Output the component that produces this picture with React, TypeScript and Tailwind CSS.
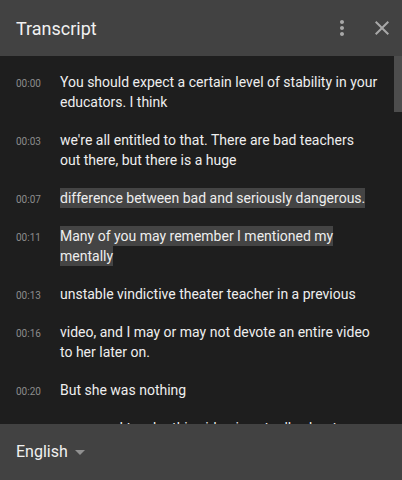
const cues = [
  { time: '00:00', lines: ['You should expect a certain level of stability in your', 'educators. I think'] },
  { time: '00:03', lines: ["we're all entitled to that. There are bad teachers", 'out there, but there is a huge'] },
  { time: '00:07', lines: ['difference between bad and seriously dangerous.'], active: true },
  { time: '00:11', lines: ['Many of you may remember I mentioned my', 'mentally'], active: true },
  { time: '00:13', lines: ['unstable vindictive theater teacher in a previous'] },
  { time: '00:16', lines: ['video, and I may or may not devote an entire video', 'to her later on.'] },
  { time: '00:20', lines: ['But she was nothing'] },
  { time: '00:22', lines: ['compared to who this video is actually about'] },
];

export default function App() {
  return (
    <div className="flex h-[480px] w-[402px] flex-col bg-[#1e1e1e] font-['Roboto',sans-serif]">
      <header className="flex h-14 shrink-0 items-center bg-[#424242] pl-4 pr-2">
        <h1 className="flex-1 text-[18px] text-[#f1f1f1]">Transcript</h1>
        <div className="flex items-center gap-4">
          <svg viewBox="0 0 24 24" className="h-6 w-6 fill-[#a8a8a8]">
            <path d="M12 8c1.1 0 2-.9 2-2s-.9-2-2-2-2 .9-2 2 .9 2 2 2zm0 2c-1.1 0-2 .9-2 2s.9 2 2 2 2-.9 2-2-.9-2-2-2zm0 6c-1.1 0-2 .9-2 2s.9 2 2 2 2-.9 2-2-.9-2-2-2z" />
          </svg>
          <svg viewBox="0 0 24 24" className="h-6 w-6 fill-[#a8a8a8]">
            <path d="M19 6.41L17.59 5 12 10.59 6.41 5 5 6.41 10.59 12 5 17.59 6.41 19 12 13.41 17.59 19 19 17.59 13.41 12z" />
          </svg>
        </div>
      </header>

      <div className="relative flex-1 overflow-hidden pt-[7px]">
        {cues.map(cue => (
          <div key={cue.time} className="flex items-baseline py-[9px] pl-4">
            <span className="w-11 shrink-0 text-[10px] text-[#8c8c8c]">{cue.time}</span>
            <p className="w-[326px] whitespace-nowrap text-[14px] leading-5 text-[#eeeeee]">
              {cue.lines.map((line, i) => (
                <span key={i}>
                  {i > 0 && <br />}
                  {cue.active ? <span className="bg-[#444444] py-[2px]">{line}</span> : line}
                </span>
              ))}
            </p>
          </div>
        ))}
        <div className="absolute right-0 top-0 h-14 w-2 bg-[#4d4d4d]" />
      </div>

      <footer className="flex h-14 shrink-0 items-center bg-[#424242] px-4">
        <span className="text-[16px] text-[#f1f1f1]">English</span>
        <svg viewBox="0 0 24 24" className="h-6 w-6 fill-[#909090]">
          <path d="M7 10l5 5 5-5z" />
        </svg>
      </footer>
    </div>
  );
}
